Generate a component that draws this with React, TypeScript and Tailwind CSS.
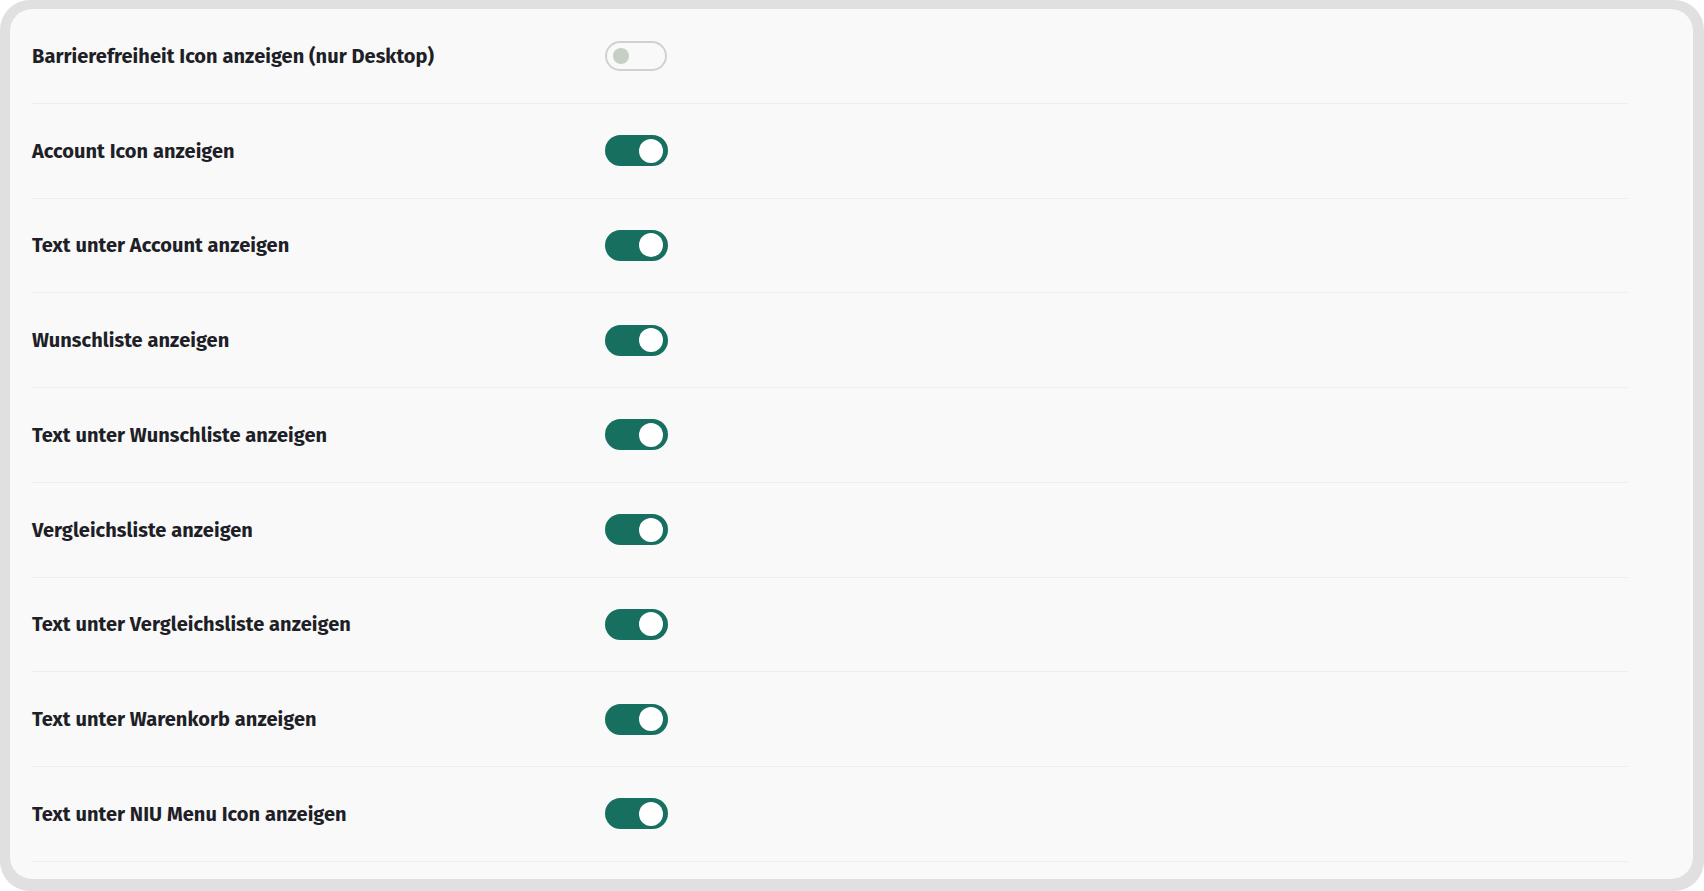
import { useState } from 'react';

const ROWS = [
  { label: 'Barrierefreiheit Icon anzeigen (nur Desktop)', on: false },
  { label: 'Account Icon anzeigen', on: true },
  { label: 'Text unter Account anzeigen', on: true },
  { label: 'Wunschliste anzeigen', on: true },
  { label: 'Text unter Wunschliste anzeigen', on: true },
  { label: 'Vergleichsliste anzeigen', on: true },
  { label: 'Text unter Vergleichsliste anzeigen', on: true },
  { label: 'Text unter Warenkorb anzeigen', on: true },
  { label: 'Text unter NIU Menu Icon anzeigen', on: true },
];

function Toggle({ on, onClick }: { on: boolean; onClick: () => void }) {
  if (!on) {
    return (
      <button
        onClick={onClick}
        className="w-[62px] h-[30px] rounded-full border-2 border-[#cdd3cd] bg-transparent flex items-center pl-[6px]"
      >
        <span className="w-4 h-4 rounded-full bg-[#c6cec6]" />
      </button>
    );
  }
  return (
    <button
      onClick={onClick}
      className="w-[63px] h-[31px] rounded-full bg-[#166f5f] flex items-center justify-end pr-[5px]"
    >
      <span className="w-6 h-6 rounded-full bg-white" />
    </button>
  );
}

export default function App() {
  const [rows, setRows] = useState(ROWS);

  const flip = (i: number) =>
    setRows(rows.map((r, j) => (j === i ? { ...r, on: !r.on } : r)));

  return (
    <div className="w-[1704px] h-[891px] bg-white">
      <div className="w-full h-full bg-[#e0e0e0] rounded-[30px] p-[10px] pr-[11px] pb-[11px]">
        <div
          className="w-full h-full bg-[#f9f9f9] rounded-[22px] pl-[22px] pr-[66px]"
          style={{ fontFamily: '"Fira Sans", Lato, "Noto Sans", sans-serif' }}
        >
          <div className="-mt-px">
            {rows.map((r, i) => (
              <div
                key={r.label}
                className="h-[94.75px] border-b border-[#ededed] flex items-center"
              >
                <span className="w-[573px] text-[20px] font-bold text-[#1e1f27] tracking-[0.05px]">
                  {r.label}
                </span>
                <Toggle on={r.on} onClick={() => flip(i)} />
              </div>
            ))}
          </div>
        </div>
      </div>
    </div>
  );
}
